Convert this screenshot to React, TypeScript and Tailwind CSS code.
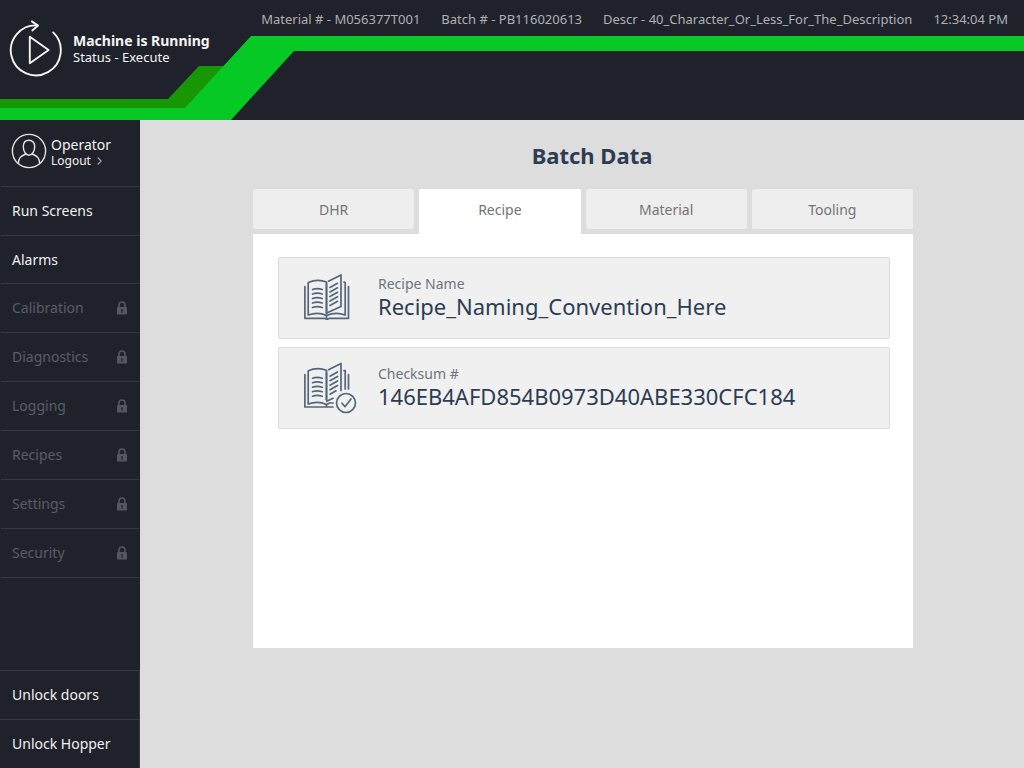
import type { ReactNode } from "react";

const menu = [
  { label: "Run Screens", locked: false, height: "h-[49px]" },
  { label: "Alarms", locked: false, height: "h-12" },
  { label: "Calibration", locked: true, height: "h-[49px]" },
  { label: "Diagnostics", locked: true, height: "h-[49px]" },
  { label: "Logging", locked: true, height: "h-[49px]" },
  { label: "Recipes", locked: true, height: "h-[49px]" },
  { label: "Settings", locked: true, height: "h-[49px]" },
  { label: "Security", locked: true, height: "h-[49px]" },
];

const tabs = ["DHR", "Recipe", "Material", "Tooling"];

function PlayIcon() {
  return (
    <svg aria-hidden="true" viewBox="9 19 54 58" className="h-[58px] w-[54px] shrink-0" fill="none" stroke="#f4f4f4" strokeWidth="1.9" strokeLinecap="round" strokeLinejoin="round">
      <path d="M53.2 32.4A25 25 0 1 1 37.5 25.4" />
      <path d="M31.8 21.4 38 25.6 32.3 30.4" />
      <path d="M29.8 36.8 48.6 50 29.8 63.2Z" />
    </svg>
  );
}

function UserIcon() {
  return (
    <svg aria-hidden="true" viewBox="0 0 36 36" className="size-9 shrink-0" fill="none" stroke="#e3e3e5" strokeWidth="1.4">
      <circle cx="18" cy="18" r="16.6" />
      <path d="M18 7.2c-3.5 0-5.7 2.600-5.7 6.400 0 4.900 2.600 8.600 5.700 8.600s5.700-3.700 5.700-8.600c0-3.800-2.200-6.400-5.700-6.400Z" />
      <path d="M7.300 30.600c.2-5.400 1.800-7.400 7.700-9.600M28.700 30.600c-.2-5.400-1.800-7.400-7.700-9.600" />
    </svg>
  );
}

function LockIcon() {
  return (
    <svg aria-hidden="true" viewBox="0 0 10 14" className="h-3.5 w-2.5 shrink-0">
      <path d="M2 6.500V4a3 3 0 0 1 6 0v2.500" fill="none" stroke="#55565f" strokeWidth="1.600" />
      <rect y="6" width="10" height="7.500" rx=".6" fill="#55565f" />
      <path d="M4.200 8.300h1.600v1.400l-.3.400v1.900h-1v-1.900l-.3-.4Z" fill="#20222b" />
    </svg>
  );
}

function BookIcon() {
  return (
    <svg aria-hidden="true" viewBox="0 0 54 52" className="h-[52px] w-[54px]" fill="none" stroke="#55657a" strokeWidth="1.700" strokeLinecap="round" strokeLinejoin="round">
      <path d="M4.200 43V10.500Q13.500 6.500 22.500 10v31.500M4.200 43Q14 39.500 22.500 43.500 32 39.500 41.200 43V10.500l-1.200-.4" />
      <path d="M22.500 41V12.200M24.500 9.200 37 3V34.500L22.700 41" />
      <path d="M.9 14.500V46.300H20.500l1.500.8h2l1.500-.8H44.500V14.500M22.500 43.500V46" />
      <path d="M8.500 17.500Q13 15.800 18.300 17.500M8.500 22Q13 20.300 18.300 22M8.500 26.500Q13 24.800 18.300 26.500M8.500 31Q13 29.300 18.300 31M8.500 35.500Q13 33.800 18.300 35.500" />
      <path d="M26 15.500 33.500 11.300M26 20l7.500-4.200M26 24.500l7.500-4.200M26 29l7.500-4.200M26 33.500l7.500-4.200" />
    </svg>
  );
}

function BookCheckIcon() {
  return (
    <svg aria-hidden="true" viewBox="0 0 54 52" className="h-[52px] w-[54px]" fill="none" stroke="#55657a" strokeWidth="1.700" strokeLinecap="round" strokeLinejoin="round">
      <path d="M4.200 42V8.700Q13.500 4.700 22.500 8.200v29.500M4.200 42Q14 38.500 22.500 42.500l3-1.500H29M40 8.700h1.200V27" />
      <path d="M22.500 37.500V10.400M24.500 7.700 37 1.400V28.500M22.700 39.300 29 36.300" />
      <path d="M.9 12.700V45H29M22.500 42.500V45M44.500 12.700V27" />
      <path d="M8.500 16.200Q13 14.500 18.300 16.200M8.500 20.700Q13 19 18.300 20.700M8.500 25.200Q13 23.500 18.300 25.200M8.500 29.700Q13 28 18.300 29.700M8.500 34.200Q13 32.500 18.300 34.200" />
      <path d="M26 14.200 33.500 10M26 18.700l7.500-4.200M26 23.200l7.500-4.200M26 27.700l7.500-4.200M26 32.200l6-3.400" />
      <circle cx="42" cy="41" r="9.500" />
      <path d="M38 41.200 41 44.700 47 37" />
    </svg>
  );
}

function DataCard({ icon, label, value }: { icon: ReactNode; label: string; value: string }) {
  return (
    <div className="flex min-h-[82px] items-center gap-5 rounded-xs border border-[#dcdcdc] bg-[#f0f0f0] pl-[25px]">
      {icon}
      <dl className="min-w-0">
        <dt className="text-sm leading-4 text-[#6d7480]">{label}</dt>
        <dd className="text-[22px] leading-7 break-words text-[#2d3c52]">{value}</dd>
      </dl>
    </div>
  );
}

export default function App() {
  return (
    <div className="flex min-h-screen flex-col bg-[#dddddd] font-['Noto_Sans','Open_Sans',sans-serif]">
      <header className="relative h-[120px] overflow-hidden bg-[#20222b]">
        <svg aria-hidden="true" className="absolute inset-0 h-full w-full">
          <path d="M0 99H168L199 66H240L205 112H0Z" fill="#189705" />
          <path d="M0 108H185L251 36H6000V51H294L231 120H0Z" fill="#07c925" />
        </svg>
        <div className="relative flex items-start justify-between">
          <div className="flex items-center gap-2.5 pt-[19px] pl-[9px]">
            <PlayIcon />
            <div className="pt-0.5 text-[#f4f4f4]">
              <p className="text-sm leading-4 font-bold">Machine is Running</p>
              <p className="text-[13px] leading-4">Status - Execute</p>
            </div>
          </div>
          <div className="flex gap-[21px] pt-[9px] pr-4 text-[13px] leading-5 whitespace-nowrap text-[#b0b0b3]">
            <span>Material # - M056377T001</span>
            <span>Batch # - PB116020613</span>
            <span>Descr - 40_Character_Or_Less_For_The_Description</span>
            <time>12:34:04 PM</time>
          </div>
        </div>
      </header>

      <div className="flex flex-1">
        <aside className="flex w-[140px] shrink-0 flex-col bg-[#20222b] text-sm text-[#f0f0f0]">
          <div className="mx-px flex h-[67px] items-start gap-1 border-b border-[#373943] pt-[13px] pl-2.5">
            <UserIcon />
            <div className="pt-1">
              <p className="leading-4">Operator</p>
              <button type="button" className="flex items-center gap-1.5 text-xs leading-4">
                Logout
                <svg aria-hidden="true" viewBox="0 0 5 8" className="h-2 w-[5px]" fill="none" stroke="#a0a0a5" strokeWidth="1.300">
                  <path d="M.7.500 4.200 4 .7 7.500" />
                </svg>
              </button>
            </div>
          </div>
          <nav className="mx-px">
            {menu.map(({ label, locked, height }) => (
              <button
                key={label}
                type="button"
                disabled={locked}
                className={`flex w-full items-center justify-between border-b border-[#373943] pr-3 pl-[11px] ${height} ${locked ? "text-[#5b5c64]" : "text-[#f0f0f0]"}`}
              >
                {label}
                {locked && <LockIcon />}
              </button>
            ))}
          </nav>
          <div className="mt-auto border-r border-[#373943]">
            <button type="button" className="flex h-[49px] w-full items-center border-t border-[#373943] pl-3">Unlock doors</button>
            <button type="button" className="flex h-[49px] w-full items-center border-t border-[#373943] pl-3">Unlock Hopper</button>
          </div>
        </aside>

        <main className="flex-1 pt-[19px] pr-6 pl-[26px]">
          <div className="mx-auto max-w-[660px]">
            <h1 className="pl-[18px] text-center text-[22px] leading-8 font-bold text-[#2d3c52]">Batch Data</h1>
            <div role="tablist" className="mt-[18px] grid grid-cols-4 gap-[5px]">
              {tabs.map((tab) => {
                const active = tab === "Recipe";
                return (
                  <button
                    key={tab}
                    type="button"
                    role="tab"
                    aria-selected={active}
                    className={`pt-0.5 text-sm leading-[38px] text-[#747474] ${active ? "rounded-t-xs bg-white pb-[5px]" : "mb-[5px] rounded-xs bg-[#eeeeee]"}`}
                  >
                    {tab}
                  </button>
                );
              })}
            </div>
            <section role="tabpanel" aria-label="Recipe" className="flex min-h-[414px] flex-col gap-2 bg-white pt-[23px] pr-[23px] pl-[25px]">
              <DataCard icon={<BookIcon />} label="Recipe Name" value="Recipe_Naming_Convention_Here" />
              <DataCard icon={<BookCheckIcon />} label="Checksum #" value="146EB4AFD854B0973D40ABE330CFC184" />
            </section>
          </div>
        </main>
      </div>
    </div>
  );
}
